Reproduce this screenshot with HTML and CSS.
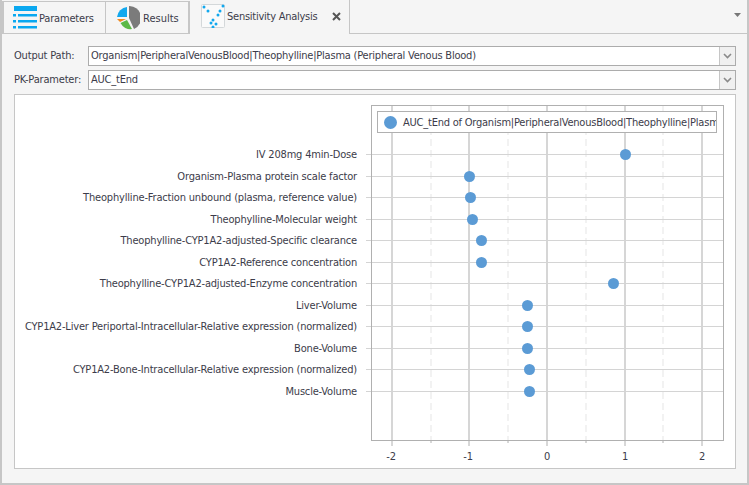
FILE: index.html
```html
<!DOCTYPE html>
<html lang="en">
<head>
<meta charset="utf-8">
<title>Sensitivity Analysis</title>
<link rel="stylesheet" href="styles.css">
</head>
<body>
<div class="window">
  <div class="tabbar">
    <div class="tab tab-params">
      <svg class="tab-icon" width="24" height="23" viewBox="0 0 24 23"><g fill="#0aa8f0"><rect x="1" y="0" width="23" height="5"/><rect x="0" y="8" width="3" height="2.500"/><rect x="5" y="8" width="19" height="2.500"/><rect x="0" y="14" width="3" height="2.500"/><rect x="5" y="14" width="19" height="2.500"/><rect x="0" y="20" width="3" height="2.500"/><rect x="5" y="20" width="19" height="2.500"/></g></svg>
      <span>Parameters</span>
    </div>
    <div class="tab tab-results">
      <svg class="tab-icon" width="24" height="24" viewBox="0 0 24 24"><path d="M11 1 A11 11 0 0 0 1 11 L11 11 Z" fill="#12a8ee"/><path d="M13 0 A12 12 0 0 1 18 23 L13 12 Z" fill="#7b7b7b"/><path d="M1 13 L10 13 L4 16 Z" fill="#f08a22"/><path d="M4.500 17 L11 14 L16 23 A11 11 0 0 1 4.500 17 Z" fill="#5db947"/></svg>
      <span class="tab-results-text">Results</span>
    </div>
    <div class="tab tab-active">
      <svg class="tab-icon" width="24" height="24" viewBox="0 0 24 24"><rect x="0.500" y="0.500" width="23" height="23" rx="1" fill="#fafafa" stroke="#d4d8da"/><g fill="#12a8ee"><circle cx="3" cy="3" r="1.500"/><circle cx="7" cy="7" r="1.500"/><circle cx="10" cy="19" r="1.500"/><circle cx="12" cy="16" r="1.500"/><circle cx="12" cy="23" r="1.500"/><circle cx="15" cy="20" r="1.500"/><circle cx="17" cy="11" r="1.500"/><circle cx="19" cy="7" r="1.500"/><circle cx="22" cy="2" r="1.500"/></g></svg>
      <span class="tab-title">Sensitivity Analysis</span>
      <svg class="tab-close" width="9" height="9" viewBox="0 0 9 9"><path d="M1 1 L8 8 M8 1 L1 8" stroke="#555" stroke-width="2"/></svg>
    </div>
    <div class="tab-spacer"></div>
    <svg class="tab-menu" width="7" height="4" viewBox="0 0 7 4"><path d="M0 0 H7 L3.500 4 Z" fill="#777"/></svg>
  </div>
  <div class="content">
    <div class="field">
      <label class="field-label">Output Path:</label>
      <div class="combo"><span class="combo-text">Organism|PeripheralVenousBlood|Theophylline|Plasma (Peripheral Venous Blood)</span><span class="combo-btn"><svg width="9" height="6" viewBox="0 0 9 6"><path d="M1 1 L4.500 4.500 L8 1" fill="none" stroke="#8a8a8a" stroke-width="1.600"/></svg></span></div>
    </div>
    <div class="field">
      <label class="field-label">PK-Parameter:</label>
      <div class="combo"><span class="combo-text">AUC_tEnd</span><span class="combo-btn"><svg width="9" height="6" viewBox="0 0 9 6"><path d="M1 1 L4.500 4.500 L8 1" fill="none" stroke="#8a8a8a" stroke-width="1.600"/></svg></span></div>
    </div>
    <div class="chart">
      <ul class="labels">
        <li>IV 208mg 4min-Dose</li>
        <li>Organism-Plasma protein scale factor</li>
        <li>Theophylline-Fraction unbound (plasma, reference value)</li>
        <li>Theophylline-Molecular weight</li>
        <li>Theophylline-CYP1A2-adjusted-Specific clearance</li>
        <li>CYP1A2-Reference concentration</li>
        <li>Theophylline-CYP1A2-adjusted-Enzyme concentration</li>
        <li>Liver-Volume</li>
        <li>CYP1A2-Liver Periportal-Intracellular-Relative expression (normalized)</li>
        <li>Bone-Volume</li>
        <li>CYP1A2-Bone-Intracellular-Relative expression (normalized)</li>
        <li>Muscle-Volume</li>
      </ul>
      <div class="plot">
        <svg class="plot-svg" width="363" height="363" viewBox="0 0 363 363">
          <g class="minor"><path d="M70 1 V335 M147 1 V335 M225 1 V335 M302 1 V335"/></g>
          <g class="major"><path d="M31 1 V335 M108 1 V335 M186 1 V335 M264 1 V335 M341 1 V335"/></g>
          <g class="rows"><path d="M5 49.500 H362 M5 71.500 H362 M5 92.500 H362 M5 114.500 H362 M5 135.500 H362 M5 157.500 H362 M5 178.500 H362 M5 200.500 H362 M5 221.500 H362 M5 243.500 H362 M5 264.500 H362 M5 286.500 H362"/></g>
          <rect class="frame" x="10.500" y="0.500" width="352" height="335"/>
          <g class="ticks"><path d="M31 335 V341 M70 335 V338 M108 335 V341 M147 335 V338 M186 335 V341 M225 335 V338 M264 335 V341 M302 335 V338 M341 335 V341"/></g>
          <g class="dots">
            <circle cx="264.500" cy="49.500" r="5.500"/><circle cx="108.500" cy="71.500" r="5.500"/><circle cx="109.500" cy="92.500" r="5.500"/><circle cx="111.500" cy="114.500" r="5.500"/><circle cx="120.500" cy="135.500" r="5.500"/><circle cx="120.500" cy="157.500" r="5.500"/><circle cx="252.500" cy="178.500" r="5.500"/><circle cx="166.500" cy="200.500" r="5.500"/><circle cx="166.500" cy="221.500" r="5.500"/><circle cx="166.500" cy="243.500" r="5.500"/><circle cx="168.500" cy="264.500" r="5.500"/><circle cx="168.500" cy="286.500" r="5.500"/>
          </g>
          <g class="axis-text">
            <text x="30" y="355" text-anchor="middle">-2</text><text x="107" y="355" text-anchor="middle">-1</text><text x="186" y="355" text-anchor="middle">0</text><text x="264" y="355" text-anchor="middle">1</text><text x="341" y="355" text-anchor="middle">2</text>
          </g>
        </svg>
        <div class="legend"><span class="legend-dot"></span><span class="legend-text">AUC_tEnd of Organism|PeripheralVenousBlood|Theophylline|Plasma (Peripheral Venous Blood)</span></div>
      </div>
    </div>
  </div>
</div>
</body>
</html>
```
FILE: styles.css
```css
* { box-sizing: border-box; }
html, body { margin: 0; padding: 0; }
body { width: 749px; height: 485px; background: #f5f5f5; font-family: "DejaVu Sans Condensed", "DejaVu Sans", sans-serif; font-stretch: condensed; font-size: 11px; letter-spacing: -0.18px; color: #3c3c4a; overflow: hidden; }
svg { display: block; flex: none; }
.window { width: 749px; height: 485px; display: flex; flex-direction: column; border-left: 2px solid #c6c6c6; border-right: 2px solid #c6c6c6; border-bottom: 2px solid #c6c6c6; }
.tabbar { height: 34px; display: flex; align-items: flex-start; border-bottom: 1px solid #c6c6c6; flex: none; }
.tab { height: 33px; margin-top: 1px; display: flex; align-items: center; border: 1px solid #c6c6c6; border-bottom: 0; border-left-width: 2px; }
.tab-params { width: 104px; padding-left: 9px; }
.tab-params .tab-icon { margin-right: 2px; margin-top: -2px; }
.tab-results { width: 84px; padding-left: 10px; border-left: 0; border-right-width: 2px; }
.tab-results .tab-icon { margin-right: 3px; }
.tab-results-text { letter-spacing: 0; }
.tab-active { width: 160px; height: 34px; margin-top: 0; margin-bottom: -1px; padding-left: 11px; background: #f5f5f5; border-left: 0; border-right-width: 1px; border-top: 0; }
.tab-active .tab-icon { margin-right: 2px; margin-top: -2px; }
.tab-title { margin-top: -2px; width: 101px; white-space: nowrap; letter-spacing: -0.25px; }
.tab-close { margin-left: 4px; margin-top: -2px; }
.tab-spacer { flex: 1; }
.tab-menu { margin: 13px 6px 0 0; }
.content { flex: 1; padding: 12px 11px 14px 12px; display: flex; flex-direction: column; gap: 5px; }
.field { display: flex; align-items: center; height: 19px; flex: none; }
.field-label { width: 74px; flex: none; white-space: nowrap; }
.combo { flex: 1; height: 20px; display: flex; align-items: center; background: #fff; border: 1px solid #acacac; }
.combo-text { flex: 1; padding-left: 2px; white-space: nowrap; letter-spacing: -0.22px; }
.combo-btn { width: 16px; height: 18px; display: flex; align-items: center; justify-content: center; background: #f0f0f0; border-left: 1px solid #c6c6c6; }
.chart { flex: 1; background: #fff; border: 1px solid #c6c6c6; display: flex; position: relative; }
.labels { list-style: none; margin: 0; padding: 49px 0 0 0; width: 342px; flex: none; text-align: right; }
.labels li { height: 21.500px; line-height: 21.500px; white-space: nowrap; }
.plot { position: relative; width: 363px; margin-left: 4px; margin-top: 10px; height: 363px; }
.minor path { stroke: #f2f2f2; stroke-width: 2; stroke-dasharray: 7 4; fill: none; }
.major path { stroke: #d6d6d6; stroke-width: 2; fill: none; }
.rows path { stroke: #d4d4d4; stroke-width: 1; fill: none; }
.frame { fill: none; stroke: #b0b0b0; }
.ticks path { stroke: #b0b0b0; stroke-width: 1; fill: none; }
.dots circle { fill: #5b9bd5; }
.axis-text text { font-family: "DejaVu Sans Condensed", "DejaVu Sans", sans-serif; font-stretch: condensed; font-size: 11px; fill: #3c3c4a; }
.legend { position: absolute; left: 16px; top: 6px; width: 340px; height: 22px; display: flex; align-items: center; background: #fff; border: 1px solid #b0b0b0; overflow: hidden; padding-left: 6px; gap: 6px; letter-spacing: -0.22px; }
.legend-dot { width: 13px; height: 13px; border-radius: 50%; background: #5b9bd5; flex: none; }
.legend-text { white-space: nowrap; }
```
